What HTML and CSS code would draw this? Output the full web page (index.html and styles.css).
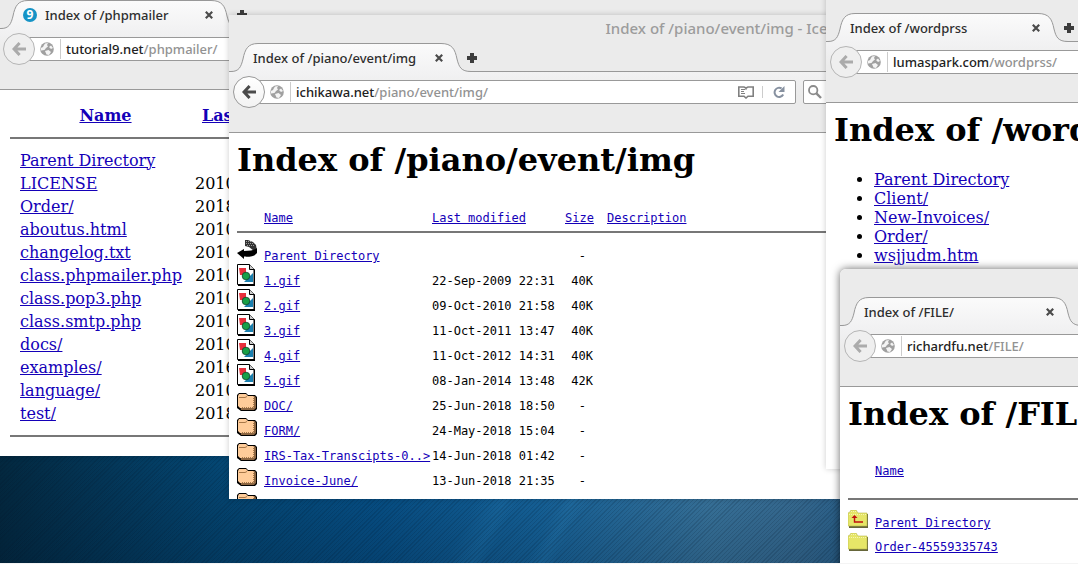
FILE: index.html
```html
<!DOCTYPE html>
<html lang="en">
  <head>
    <meta charset="utf-8" />
    <title>Open directories</title>
    <link rel="stylesheet" href="styles.css">
  </head>
  <body>
    <!-- shared icons -->
    <svg class="sprite" aria-hidden="true">
      <defs>
        <linearGradient id="tabFill" x1="0" y1="0" x2="0" y2="1">
          <stop offset="0" stop-color="#fbfbfb" />
          <stop offset="1" stop-color="#f2f2f3" />
        </linearGradient>
      </defs>
      <symbol id="tab" viewBox="0 0 242 29">
        <path fill="url(#tabFill)" d="M0 29V28.5H2C10 28.5 12 24 14 16C16 6 19 .5 29 .5H212C223 .5 226 6 228 16C230 24 232 28.5 242 28.5V29Z" />
        <path fill="none" stroke="#989898" d="M0 28.5H2C10 28.5 12 24 14 16C16 6 19 .5 29 .5H212C223 .5 226 6 228 16C230 24 232 28.5 242 28.5" />
      </symbol>
      <symbol id="close" viewBox="0 0 8 8">
        <path fill="none" stroke="#4b4b4b" stroke-width="2.2" d="M.8 .8L7.2 7.2M7.2 .8L.8 7.2" />
      </symbol>
      <symbol id="plus" viewBox="0 0 10 10">
        <path fill="#3c3c3c" d="M3 0H7V3H10V7H7V10H3V7H0V3H3Z" />
      </symbol>
      <symbol id="back" viewBox="0 0 14 14">
        <path fill="none" stroke="currentColor" stroke-width="3" d="M7.6 1L2 7L7.6 13M2.5 7H14" />
      </symbol>
      <symbol id="globe" viewBox="0 0 14 14">
        <circle cx="7" cy="7" r="6.8" fill="#a0a0a0" />
        <path fill="#f4f4f4" d="M5 1.5L8 1L7 3L8 4.5L6 6L4.5 8L1 8.5L.8 6L3 5L4 3ZM9 5L11 3.5L13 6L11 7ZM5 9L8.5 8L11 10L9 13L6.5 12.5Z" />
      </symbol>
      <symbol id="reader" viewBox="0 0 16 13">
        <path fill="#fff" stroke="#808080" stroke-width="1.6" d="M.8 1H6L8 2L10 1H15.2V10.2H10L8 12L6 10.2H.8Z" />
        <path stroke="#808080" d="M3 3.5H7M3 5.5H6M3 7.5H7M8 2V4" />
      </symbol>
      <symbol id="reload" viewBox="0 0 12 12">
        <path fill="none" stroke="#8791a0" stroke-width="2" d="M10.2 8.6A4.6 4.6 0 1 1 8.6 2.4" />
        <path fill="#8791a0" d="M11.5 0V6H5.5Z" />
      </symbol>
      <symbol id="magnifier" viewBox="0 0 14 14">
        <circle cx="5.2" cy="5.2" r="4.2" fill="none" stroke="#8b8b8b" stroke-width="1.8" />
        <path stroke="#8b8b8b" stroke-width="2.4" d="M8.4 8.4L13 13" />
      </symbol>
      <symbol id="up" viewBox="0 0 20 22">
        <path fill="#333" d="M8 1H11L16 3L19 6L20 12H17L12 8L8 7Z" />
        <path stroke="#999" stroke-dasharray="1 1" d="M9 2.5H14M9 4.5H16M10 6.5H17" />
        <path fill="#000" d="M0 14L7 10V12C13 12 18 11 20 9V14C18 17 13 18 7 17.6V20Z" />
      </symbol>
      <symbol id="image" viewBox="0 0 20 22">
        <path d="M1 1H13L18 6V22H1Z" />
        <path fill="#fff" stroke="#000" d="M.5 .5H12.5L17 5V20.5H.5Z" />
        <path fill="#e8303c" d="M2 4H9V11H3Z" />
        <path fill="#1a80b0" d="M16 9V18H7Z" />
        <circle cx="9" cy="12" r="3.8" fill="#18a048" stroke="#104028" stroke-width=".8" />
        <path fill="#ccc" stroke="#000" d="M12.5 .5V5.5H17.5" />
      </symbol>
      <symbol id="folder" viewBox="0 0 20 22">
        <path d="M0 6L2 4H9L11 6H18L20 8V20L18 22H4L0 19Z" />
        <path fill="#8c6642" d="M2 7H18L19 9V19L17 21H4Z" />
        <path fill="#ffcc99" d="M1 7L2 5H9L11 7H16L17 8V18L16 19H3L1 17Z" />
        <path fill="none" stroke="#a87848" d="M2 8.5H8L10 7.5" />
        <path fill="none" stroke="#a87848" stroke-dasharray="1 1" d="M16.5 9V18.5H4" />
      </symbol>
      <symbol id="yellow" viewBox="0 0 20 18">
        <path fill="#66663a" d="M1 4H20V18H1Z" />
        <path fill="#e6e668" stroke="#b8b84c" stroke-width=".6" d="M0 3L2 2L3 0H8L10 3H19V16H0Z" />
        <path stroke="#f6f6b0" stroke-dasharray="1 1" d="M3 1.5H8M1 4.5H18" />
      </symbol>
      <symbol id="yellowUp" viewBox="0 0 20 18">
        <use href="#yellow" />
        <path fill="none" stroke="#c01010" stroke-width="1.4" d="M6.5 6V12H15" />
        <path fill="#c01010" d="M3.5 8L6.5 5L9.5 8Z" />
      </symbol>
    </svg>

    <main class="desktop">
      <section class="window phpmailer">
        <div class="titlebar"></div>
        <div class="tabs">
          <div class="tab">
            <svg class="tab-shape"><use href="#tab" /></svg>
            <div class="tab-content">
              <svg class="favicon" viewBox="0 0 14 14">
                <circle cx="7" cy="7" r="7" fill="#1593c6" />
                <text x="7" y="11">9</text>
              </svg>
              <span class="tab-title">Index of /phpmailer</span>
              <button class="close" aria-label="Close tab"><svg><use href="#close" /></svg></button>
            </div>
          </div>
          <button class="new-tab" aria-label="New tab"><svg><use href="#plus" /></svg></button>
        </div>
        <div class="nav">
          <button class="back" aria-label="Back" disabled><svg><use href="#back" /></svg></button>
          <div class="url">
            <svg class="globe"><use href="#globe" /></svg>
            <label for="url1">tutorial9.net</label>
            <input id="url1" type="text" value="/phpmailer/" />
          </div>
        </div>
        <div class="page">
          <table class="plain">
            <thead>
              <tr><th class="name"><a href="#">Name</a></th><th class="date"><a href="#">Last modified</a></th></tr>
            </thead>
            <tbody>
              <tr><td><a href="#">Parent Directory</a></td><td></td></tr>
              <tr><td><a href="#">LICENSE</a></td><td>2010</td></tr>
              <tr><td><a href="#">Order/</a></td><td>2018</td></tr>
              <tr><td><a href="#">aboutus.html</a></td><td>2010</td></tr>
              <tr><td><a href="#">changelog.txt</a></td><td>2010</td></tr>
              <tr><td><a href="#">class.phpmailer.php</a></td><td>2010</td></tr>
              <tr><td><a href="#">class.pop3.php</a></td><td>2010</td></tr>
              <tr><td><a href="#">class.smtp.php</a></td><td>2010</td></tr>
              <tr><td><a href="#">docs/</a></td><td>2010</td></tr>
              <tr><td><a href="#">examples/</a></td><td>2016</td></tr>
              <tr><td><a href="#">language/</a></td><td>2010</td></tr>
              <tr><td><a href="#">test/</a></td><td>2018</td></tr>
            </tbody>
          </table>
        </div>
      </section>

      <section class="window piano">
        <div class="titlebar">Index of /piano/event/img - Iceweasel</div>
        <div class="tabs">
          <div class="tab">
            <svg class="tab-shape"><use href="#tab" /></svg>
            <div class="tab-content">
              <span class="tab-title">Index of /piano/event/img</span>
              <button class="close" aria-label="Close tab"><svg><use href="#close" /></svg></button>
            </div>
          </div>
          <button class="new-tab" aria-label="New tab"><svg><use href="#plus" /></svg></button>
        </div>
        <div class="nav">
          <button class="back" aria-label="Back"><svg><use href="#back" /></svg></button>
          <div class="url">
            <svg class="globe"><use href="#globe" /></svg>
            <label for="url2">ichikawa.net</label>
            <input id="url2" type="text" value="/piano/event/img/" />
            <button class="reader" aria-label="Reader view"><svg><use href="#reader" /></svg></button>
            <button class="reload" aria-label="Reload"><svg><use href="#reload" /></svg></button>
          </div>
          <div class="search">
            <svg><use href="#magnifier" /></svg>
            <input type="search" aria-label="Search" />
          </div>
        </div>
        <div class="page">
          <h1>Index of /piano/event/img</h1>
          <table class="listing">
            <thead>
              <tr><th class="icon"></th><th class="name"><a href="#">Name</a></th><th class="date"><a href="#">Last modified</a></th><th class="size"><a href="#">Size</a></th><th class="desc"><a href="#">Description</a></th></tr>
            </thead>
            <tbody>
              <tr><td><svg><use href="#up" /></svg></td><td><a href="#">Parent Directory</a></td><td></td><td class="none">-</td><td></td></tr>
              <tr><td><svg><use href="#image" /></svg></td><td><a href="#">1.gif</a></td><td>22-Sep-2009 22:31</td><td class="size">40K</td><td></td></tr>
              <tr><td><svg><use href="#image" /></svg></td><td><a href="#">2.gif</a></td><td>09-Oct-2010 21:58</td><td class="size">40K</td><td></td></tr>
              <tr><td><svg><use href="#image" /></svg></td><td><a href="#">3.gif</a></td><td>11-Oct-2011 13:47</td><td class="size">40K</td><td></td></tr>
              <tr><td><svg><use href="#image" /></svg></td><td><a href="#">4.gif</a></td><td>11-Oct-2012 14:31</td><td class="size">40K</td><td></td></tr>
              <tr><td><svg><use href="#image" /></svg></td><td><a href="#">5.gif</a></td><td>08-Jan-2014 13:48</td><td class="size">42K</td><td></td></tr>
              <tr><td><svg><use href="#folder" /></svg></td><td><a href="#">DOC/</a></td><td>25-Jun-2018 18:50</td><td class="none">-</td><td></td></tr>
              <tr><td><svg><use href="#folder" /></svg></td><td><a href="#">FORM/</a></td><td>24-May-2018 15:04</td><td class="none">-</td><td></td></tr>
              <tr><td><svg><use href="#folder" /></svg></td><td><a href="#">IRS-Tax-Transcipts-0..&gt;</a></td><td>14-Jun-2018 01:42</td><td class="none">-</td><td></td></tr>
              <tr><td><svg><use href="#folder" /></svg></td><td><a href="#">Invoice-June/</a></td><td>13-Jun-2018 21:35</td><td class="none">-</td><td></td></tr>
              <tr><td><svg><use href="#folder" /></svg></td><td></td><td></td><td></td><td></td></tr>
            </tbody>
          </table>
        </div>
      </section>

      <section class="window wordprss">
        <div class="titlebar"></div>
        <div class="tabs">
          <div class="tab">
            <svg class="tab-shape"><use href="#tab" /></svg>
            <div class="tab-content">
              <span class="tab-title">Index of /wordprss</span>
              <button class="close" aria-label="Close tab"><svg><use href="#close" /></svg></button>
            </div>
          </div>
          <button class="new-tab" aria-label="New tab"><svg><use href="#plus" /></svg></button>
        </div>
        <div class="nav">
          <button class="back" aria-label="Back" disabled><svg><use href="#back" /></svg></button>
          <div class="url">
            <svg class="globe"><use href="#globe" /></svg>
            <label for="url3">lumaspark.com</label>
            <input id="url3" type="text" value="/wordprss/" />
          </div>
        </div>
        <div class="page">
          <h1>Index of /wordprss</h1>
          <ul>
            <li><a href="#">Parent Directory</a></li>
            <li><a href="#">Client/</a></li>
            <li><a href="#">New-Invoices/</a></li>
            <li><a href="#">Order/</a></li>
            <li><a href="#">wsjjudm.htm</a></li>
          </ul>
        </div>
      </section>

      <section class="window file">
        <div class="titlebar"></div>
        <div class="tabs">
          <div class="tab">
            <svg class="tab-shape"><use href="#tab" /></svg>
            <div class="tab-content">
              <span class="tab-title">Index of /FILE/</span>
              <button class="close" aria-label="Close tab"><svg><use href="#close" /></svg></button>
            </div>
          </div>
        </div>
        <div class="nav">
          <button class="back" aria-label="Back" disabled><svg><use href="#back" /></svg></button>
          <div class="url">
            <svg class="globe"><use href="#globe" /></svg>
            <label for="url4">richardfu.net</label>
            <input id="url4" type="text" value="/FILE/" />
          </div>
        </div>
        <div class="page">
          <h1>Index of /FILE</h1>
          <table class="listing roomy">
            <thead>
              <tr><th class="icon"></th><th><a href="#">Name</a></th></tr>
            </thead>
            <tbody>
              <tr><td><svg><use href="#yellowUp" /></svg></td><td><a href="#">Parent Directory</a></td></tr>
              <tr><td><svg><use href="#yellow" /></svg></td><td><a href="#">Order-45559335743</a></td></tr>
            </tbody>
          </table>
        </div>
      </section>
    </main>
  </body>
</html>
```

FILE: styles.css
```css
* {
  box-sizing: border-box;
}
body {
  margin: 0;
  font-family: "DejaVu Serif", serif;
  font-size: 16px;
  line-height: 19px;
}
svg {
  display: block;
}
.sprite {
  position: absolute;
  width: 0;
  height: 0;
}
a {
  color: #1400b8;
}
button {
  padding: 0;
  border: none;
  background: none;
}
h1 {
  margin: 0;
  font-size: 32px;
  line-height: 38px;
  white-space: nowrap;
}

/* desktop and wallpaper */
.desktop {
  position: relative;
  height: 100vh;
  overflow: hidden;
  border-bottom: 1px solid #f4f4f4;
  background:
    repeating-linear-gradient(135deg, rgba(0, 20, 40, 0.15) 0 1px, transparent 1px 3px),
    linear-gradient(118deg, transparent 54%, rgba(60, 160, 220, 0.1) 56%, transparent 57%, transparent 60%, rgba(60, 160, 220, 0.1) 61%, transparent 62%),
    linear-gradient(to bottom, transparent 82%, rgba(0, 20, 40, 0.25)),
    linear-gradient(to right, #03283f 0%, #044672 20%, #07528a 35%, #1767a0 50%, #3c79a2 66%, #3a7098 74%, #2a6490 80%);
}
.window {
  position: absolute;
  overflow: hidden;
  background: #fff;
  box-shadow: 0 0 6px rgba(0, 0, 0, 0.2);
}
.phpmailer {
  left: -1px;
  top: -28px;
  width: 90vw;
}
.piano {
  left: 229px;
  top: 15px;
  width: 95vw;
  height: 484px;
}
.wordprss {
  left: 826px;
  top: -15px;
  width: 60vw;
  height: 484px;
}
.file {
  left: 840px;
  top: 269px;
  width: 60vw;
  height: 60vh;
  border-radius: 6px 0 0 0;
  box-shadow: 0 0 9px rgba(0, 0, 0, 0.6);
}

/* browser chrome */
.titlebar {
  height: 28px;
  background: #ebebeb;
  color: #9c9c9c;
  font: 500 15px/27px "Noto Sans", sans-serif;
  text-align: center;
}
.tabs {
  display: flex;
  height: 29px;
  background: linear-gradient(#999, #999) bottom / 100% 1px no-repeat #ebebeb;
}
.tab {
  display: grid;
  flex: none;
}
.tab-shape,
.tab-content {
  grid-area: 1 / 1;
}
.tab-shape {
  width: 242px;
  height: 29px;
}
.tab-content {
  display: flex;
  align-items: center;
  gap: 8px;
  padding: 0 28px 0 24px;
}
.tab-title {
  flex: 1;
  color: #2e2e2e;
  font: 500 13px/20px "Noto Sans", sans-serif;
  white-space: nowrap;
}
.favicon {
  width: 14px;
  height: 14px;
}
.favicon text {
  fill: #fff;
  font: bold 12px "Noto Sans", sans-serif;
  text-anchor: middle;
}
.close svg {
  width: 8px;
  height: 8px;
}
.new-tab {
  margin-left: -4px;
}
.new-tab svg {
  width: 10px;
  height: 10px;
}
.nav {
  display: flex;
  align-items: flex-start;
  height: 61px;
  padding: 4px;
  border-bottom: 1px solid #999;
  background: linear-gradient(#f2f2f3, #ebebeb 24px);
}
.back {
  z-index: 1;
  display: grid;
  flex: none;
  place-items: center;
  width: 32px;
  height: 32px;
  border: 1px solid #999;
  border-radius: 50%;
  background: linear-gradient(#fff, #f2f2f2);
  color: #4a4a4a;
}
.back:disabled {
  border-color: #b5b5b5;
  background: #efefef;
  color: #ababab;
}
.back svg,
.globe {
  width: 14px;
  height: 14px;
}
.url,
.search {
  display: flex;
  align-items: center;
  height: 24px;
  margin-top: 4px;
  border: 1px solid #999;
  background: #fff;
  font: 500 13px/20px "Noto Sans", sans-serif;
}
.url {
  flex: 1;
  margin-left: -10px;
  padding: 0 10px 0 14px;
  border-radius: 0 2px 2px 0;
}
.url label {
  margin-left: 6px;
  padding-left: 5px;
  border-left: 1px solid #ccc;
  color: #222;
}
.url input,
.search input {
  flex: 1;
  min-width: 0;
  padding: 0;
  border: none;
  background: none;
  color: #929292;
  font: inherit;
}
.reader svg {
  width: 16px;
  height: 13px;
}
.reload {
  margin-left: 8px;
  padding-left: 10px;
  border-left: 1px solid #ccc;
}
.reload svg {
  width: 12px;
  height: 12px;
}
.search {
  flex: 0 0 446px;
  margin-left: 7px;
  padding: 0 4px;
  border-radius: 2px;
}
.search svg {
  width: 14px;
  height: 14px;
}

/* directory pages */
.page {
  padding: 8px;
}
ul {
  margin: 21px 0;
  padding-left: 40px;
}
table {
  width: 100%;
  border-collapse: collapse;
  table-layout: fixed;
}
th,
td {
  padding: 0;
  text-align: left;
  white-space: nowrap;
}
.plain {
  margin: 4px 3px 11px;
  border-bottom: 2px solid #777;
}
.plain th {
  height: 36px;
  padding-bottom: 8px;
  border-bottom: 2px solid #777;
}
.plain .name {
  width: 185px;
  padding-left: 6px;
  text-align: center;
}
.plain .date {
  padding-left: 7px;
}
.plain td {
  height: 23px;
}
.plain td:first-child {
  padding-left: 10px;
}
.plain tbody tr:first-child td {
  height: 34px;
  padding-top: 9px;
}
.plain tbody tr:last-child td {
  height: 34px;
  padding-bottom: 11px;
}
.listing {
  margin-top: 24px;
  font: 12px/14px "DejaVu Sans Mono", monospace;
}
.listing th {
  height: 29px;
  padding-top: 8px;
  border-bottom: 2px solid #777;
  font-weight: normal;
  vertical-align: top;
}
.listing td {
  height: 25px;
  vertical-align: bottom;
}
.listing td:first-child {
  padding-top: 1px;
  vertical-align: top;
}
.listing tbody tr:first-child td {
  height: 31px;
}
.listing tbody tr:first-child td:first-child {
  padding-top: 6px;
}
.listing svg {
  width: 20px;
  height: 22px;
}
.listing .icon {
  width: 27px;
}
.listing .name {
  width: 168px;
}
.listing .date {
  width: 133px;
}
.listing .size {
  width: 28px;
  text-align: right;
}
.listing .none {
  padding-right: 7px;
  text-align: right;
}
.listing .desc {
  padding-left: 14px;
}
.roomy th {
  height: 42px;
  padding-top: 7px;
}
.roomy td {
  height: 24px;
}
.roomy td:first-child {
  padding-top: 3px;
}
.roomy tbody tr:first-child td:first-child {
  padding-top: 10px;
}
.roomy svg {
  height: 18px;
}
```
